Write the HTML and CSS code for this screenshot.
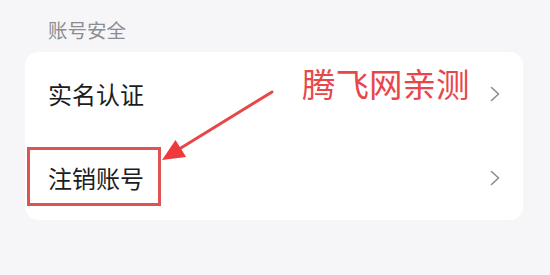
FILE: index.html
```html
<!DOCTYPE html>
<html lang="zh-CN">
<head>
<meta charset="utf-8">
<title>账号安全</title>
<link rel="stylesheet" href="styles.css">
</head>
<body>
<div class="page">
  <div class="section-title">账号安全</div>
  <div class="card">
    <div class="row">
      <span class="label">实名认证</span>
      <svg class="chev" width="10" height="16" viewBox="0 0 10 16"><polyline points="1.5,1.5 8.5,8 1.5,14.5" fill="none" stroke="#8c8c8c" stroke-width="1.6" stroke-linecap="round" stroke-linejoin="round"/></svg>
    </div>
    <div class="row">
      <span class="label">注销账号</span>
      <svg class="chev" width="10" height="16" viewBox="0 0 10 16"><polyline points="1.5,1.5 8.5,8 1.5,14.5" fill="none" stroke="#8c8c8c" stroke-width="1.6" stroke-linecap="round" stroke-linejoin="round"/></svg>
    </div>
  </div>
  <div class="note">腾飞网亲测</div>
  <svg class="overlay" width="550" height="275" viewBox="0 0 550 275">
    <rect x="28.5" y="148.5" width="131" height="56" fill="none" stroke="#e05353" stroke-width="3"/>
    <line x1="272" y1="92" x2="176" y2="151" stroke="#e8474a" stroke-width="3" stroke-linecap="round"/>
    <polygon points="162,160 175.5,139.9 186.1,156.9" fill="#f0393c"/>
  </svg>
</div>
</body>
</html>
```
FILE: styles.css
```css
html, body {
  margin: 0;
  padding: 0;
}
body {
  background: #f6f6f8;
  font-family: "Noto Sans CJK SC", "Noto Sans", sans-serif;
}
.page {
  position: relative;
  width: 550px;
  height: 275px;
  overflow: hidden;
}
.section-title {
  padding: 17px 0 9px 48px;
  line-height: 26px;
  font-size: 19.5px;
  color: #8b8d92;
}
.card {
  margin: 0 27px 0 25px;
  background: #ffffff;
  border-radius: 13px;
}
.row {
  height: 84px;
  display: flex;
  align-items: center;
  justify-content: space-between;
  padding: 0 23px 0 23px;
}
.label {
  font-size: 24px;
  color: #1c1c1e;
  line-height: 1;
}
.chev {
  display: block;
}
.note {
  position: absolute;
  left: 302px;
  top: 66px;
  font-size: 33.5px;
  line-height: 34px;
  color: #e8474a;
}
.overlay {
  position: absolute;
  left: 0;
  top: 0;
}
```
